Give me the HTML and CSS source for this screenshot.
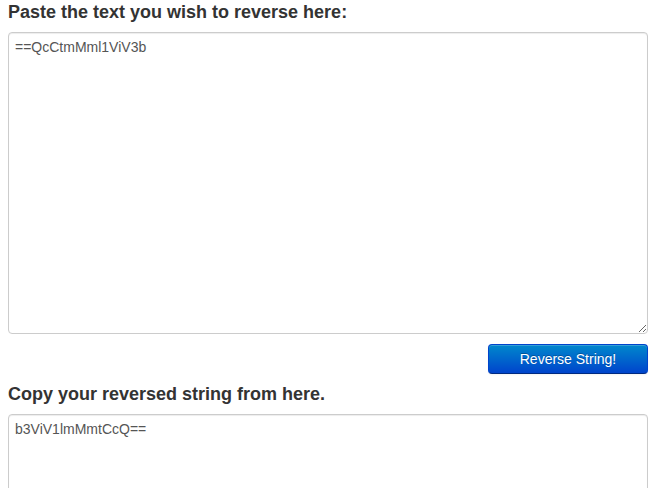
FILE: index.html
```html
<!DOCTYPE html>
<html>
<head>
<meta charset="utf-8">
<link rel="stylesheet" href="styles.css">
</head>
<body>
<div class="page">
  <h4 class="title">Paste the text you wish to reverse here:</h4>
  <textarea class="box box-input">==QcCtmMml1ViV3b</textarea>
  <div class="actions">
    <button class="btn-primary" type="button">Reverse String!</button>
  </div>
  <h4 class="title title-second">Copy your reversed string from here.</h4>
  <textarea class="box box-output">b3ViV1lmMmtCcQ==</textarea>
</div>
</body>
</html>
```
FILE: styles.css
```css
html, body {
  margin: 0;
  padding: 0;
  background: #fff;
}
body {
  font-family: "Liberation Sans", Arial, sans-serif;
  color: #333;
  font-size: 14px;
  line-height: 20px;
}
.page {
  width: 640px;
  padding: 2px 9px 0 8px;
  display: flex;
  flex-direction: column;
}
.title {
  margin: 0 0 10px;
  font-size: 18px;
  line-height: 20px;
  font-weight: bold;
  color: #333;
}
.title-second {
  margin-top: 10px;
}
.box {
  display: block;
  box-sizing: border-box;
  width: 640px;
  margin: 0;
  padding: 4px 6px;
  border: 1px solid #ccc;
  border-radius: 4px;
  font-family: "Liberation Sans", Arial, sans-serif;
  font-size: 14px;
  line-height: 20px;
  color: #555;
  background: #fff;
  box-shadow: inset 0 1px 1px rgba(0,0,0,0.075);
}
.box-input {
  height: 302px;
}
.box-output {
  height: 200px;
}
.actions {
  display: flex;
  justify-content: flex-end;
  margin-top: 10px;
}
.btn-primary {
  box-sizing: border-box;
  width: 160px;
  height: 30px;
  padding: 0 12px;
  border: 1px solid #0044cc;
  border-color: #0044cc #0044cc #002a80;
  border-radius: 4px;
  background: linear-gradient(to bottom, #0088cc, #0044cc);
  color: #fff;
  font-family: "Liberation Sans", Arial, sans-serif;
  font-size: 14px;
  line-height: 20px;
  text-shadow: 0 -1px 0 rgba(0,0,0,0.25);
  box-shadow: inset 0 1px 0 rgba(255,255,255,0.2), 0 1px 2px rgba(0,0,0,0.05);
  cursor: pointer;
}
```
